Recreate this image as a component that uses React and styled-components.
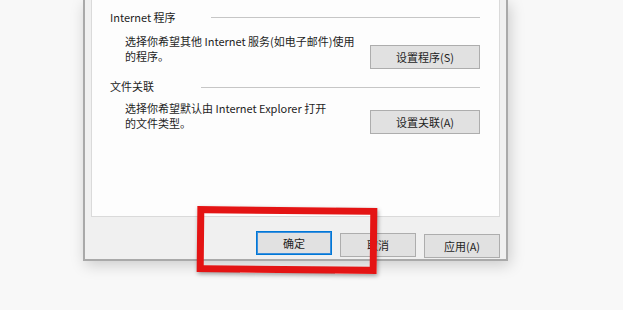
import styled, { createGlobalStyle } from "styled-components";

const GlobalStyle = createGlobalStyle`
    html, body {
        margin:0;
        padding:0;
        background-color:#f8f8f8;
        font-family:"Noto Sans CJK SC", "Liberation Sans", sans-serif;
    }
`
const Page = styled.div`
    position:relative;
    width:623px;
    height:310px;
    overflow:hidden;
    background-color:#f8f8f8;
`
const Dialog = styled.div`
    margin-left:83px;
    width:409px;
    height:259px;
    background-color:#f0f0f0;
    border:2px solid #a9a9a9;
    border-top:none;
    box-shadow:2px 4px 14px rgba(0,0,0,0.18);
    padding:0 6px;
    box-sizing:content-box;
    display:flex;
    flex-direction:column;
`
const Panel = styled.div`
    height:217px;
    box-sizing:border-box;
    background-color:#fdfdfd;
    border:1px solid #dadada;
    border-top:none;
    padding:9px 19px 0 18px;
`
const Group = styled.div`
    margin-bottom:9px;
`
const Heading = styled.div`
    display:flex;
    align-items:center;
    height:16px;
    font-size:11px;
    color:#1e1e1e;
`
const Rule = styled.div`
    flex:1;
    height:1px;
    margin-left:${props => props.gap}px;
    margin-top:${props => props.drop}px;
    background-color:#c6c6c6;
`
const Body = styled.div`
    display:flex;
    align-items:flex-start;
    margin-top:${props => props.top}px;
    padding-left:15px;
`
const Desc = styled.p`
    flex:1;
    margin:0;
    font-size:11px;
    line-height:15px;
    color:#1e1e1e;
`
const Button = styled.button`
    box-sizing:border-box;
    width:${props => props.w}px;
    height:24px;
    margin-top:${props => props.top || 0}px;
    background-color:#e1e1e1;
    border:1px solid ${props => props.primary ? "#0078d7" : "#adadad"};
    box-shadow:${props => props.primary ? "inset 0 0 0 1px #3c8fdc" : "none"};
    border-radius:0;
    font-family:"Noto Sans CJK SC", "Liberation Sans", sans-serif;
    font-size:11px;
    color:#1e1e1e;
    padding:0;
`
const Footer = styled.div`
    display:flex;
    justify-content:flex-end;
    gap:8px;
    padding-top:14px;
`
const Mark = styled.div`
    position:absolute;
    left:197px;
    top:207px;
    width:180px;
    height:66px;
    box-sizing:border-box;
    border:7px solid #e41414;
    box-shadow:1px 2px 4px rgba(0,0,0,0.35);
    transform:rotate(0.6deg);
`

function App() {
    return (
        <Page>
            <GlobalStyle />
            <Dialog>
                <Panel>
                    <Group>
                        <Heading>Internet 程序<Rule gap={35} drop={0} /></Heading>
                        <Body top={9}>
                            <Desc>选择你希望其他 Internet 服务(如电子邮件)使用<br />的程序。</Desc>
                            <Button w={110} top={11}>设置程序(S)</Button>
                        </Body>
                    </Group>
                    <Group>
                        <Heading>文件关联<Rule gap={47} drop={3} /></Heading>
                        <Body top={7}>
                            <Desc>选择你希望默认由 Internet Explorer 打开<br />的文件类型。</Desc>
                            <Button w={110} top={9}>设置关联(A)</Button>
                        </Body>
                    </Group>
                </Panel>
                <Footer>
                    <Button w={76} primary>确定</Button>
                    <Button w={76} top={2}>取消</Button>
                    <Button w={76} top={3}>应用(A)</Button>
                </Footer>
            </Dialog>
            <Mark />
        </Page>
    )
}

export default App;
